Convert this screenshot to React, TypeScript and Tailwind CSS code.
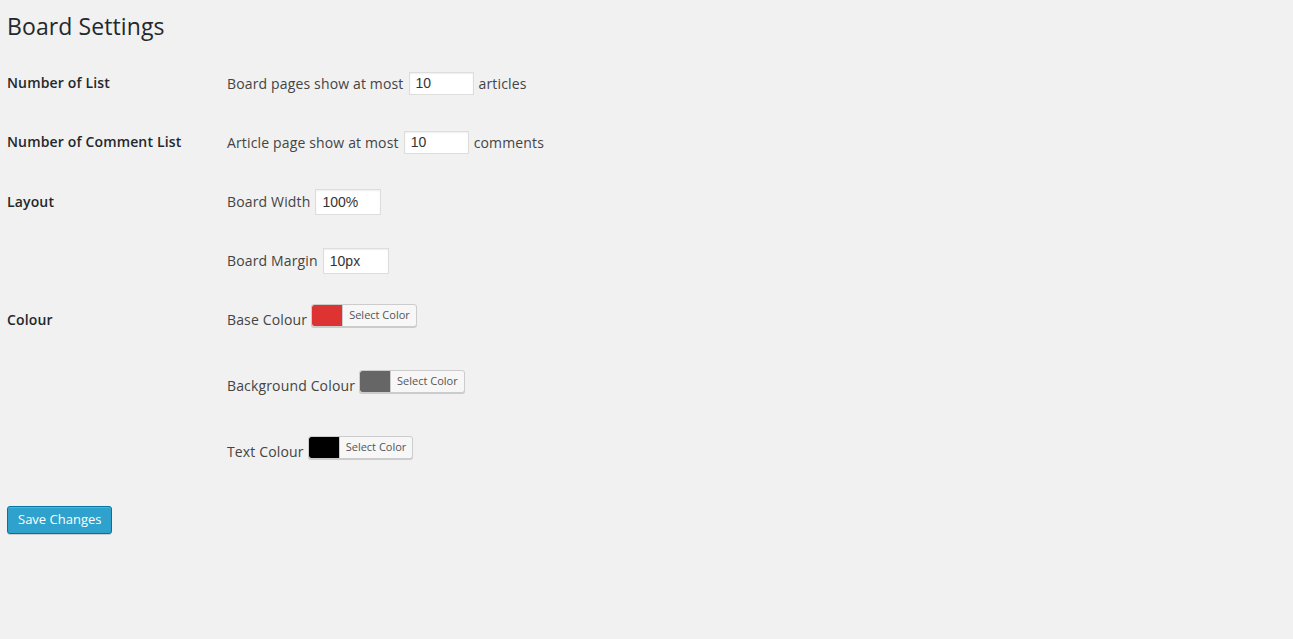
import React, { useState } from 'react';

const font = "font-['Open_Sans',_'Liberation_Sans',_sans-serif]";

const Label: React.FC<{ text?: string; shift?: boolean }> = ({ text, shift }) => (
    <div className={`w-[220px] shrink-0 text-[14px] leading-[20px] font-semibold tracking-[0.15px] text-[#23282d] ${shift ? 'mb-[-3px]' : ''}`}>
        {text}
    </div>
);

const NumberInput: React.FC<{ value: string; onChange: (v: string) => void }> = ({ value, onChange }) => (
    <input
        type="text"
        value={value}
        onChange={(e) => onChange(e.target.value)}
        className="mx-[5px] w-[65px] h-[23px] bg-white border border-[#ddd] px-[6px] text-[14px] tracking-normal text-[#333] font-['Liberation_Sans',_Arial,_sans-serif] shadow-[inset_0_1px_2px_rgba(0,0,0,0.07)] outline-none"
    />
);

const TextInput: React.FC<{ value: string; onChange: (v: string) => void }> = ({ value, onChange }) => (
    <input
        type="text"
        value={value}
        onChange={(e) => onChange(e.target.value)}
        className="ml-[5px] w-[66px] h-[26px] bg-white border border-[#ddd] px-[6px] text-[14px] tracking-normal text-[#333] font-['Liberation_Sans',_Arial,_sans-serif] shadow-[inset_0_1px_2px_rgba(0,0,0,0.07)] outline-none"
    />
);

const ColorButton: React.FC<{ swatch: string }> = ({ swatch }) => (
    <button className="ml-[4px] flex h-[23px] items-stretch rounded-[3px] border border-[#ccc] bg-[#f7f7f7] shadow-[0_1px_0_#ccc] overflow-hidden">
        <span className="w-[30px] rounded-l-[2px]" style={{ backgroundColor: swatch }} />
        <span className="flex items-center px-[6px] text-[11px] tracking-normal text-[#555] border-l border-[#ccc]">Select Color</span>
    </button>
);

const App: React.FC = () => {
    const [perPage, setPerPage] = useState('10');
    const [perComment, setPerComment] = useState('10');
    const [width, setWidth] = useState('100%');
    const [margin, setMargin] = useState('10px');

    const valueText = 'flex items-center text-[14px] tracking-[0.15px] text-[#444]';
    const colourText = 'mb-[-3px] text-[14px] leading-[20px] tracking-[0.15px] text-[#444]';

    return (
        <div className={`min-h-screen bg-[#f1f1f1] pl-[7px] ${font}`}>
            <div className="h-[54px] pt-[12px]">
                <h1 className="text-[23px] leading-[29px] font-normal tracking-[0.1px] text-[#23282d]">Board Settings</h1>
            </div>

            {/* number rows */}
            <div className="flex h-[59px] items-center pb-[1px]">
                <Label text="Number of List" />
                <div className={valueText}>
                    Board pages show at most
                    <NumberInput value={perPage} onChange={setPerPage} />
                    articles
                </div>
            </div>
            <div className="flex h-[59px] items-center pb-[1px]">
                <Label text="Number of Comment List" />
                <div className={valueText}>
                    Article page show at most
                    <NumberInput value={perComment} onChange={setPerComment} />
                    comments
                </div>
            </div>

            {/* layout */}
            <div className="flex h-[59px] items-center">
                <Label text="Layout" />
                <div className={valueText}>
                    Board Width
                    <TextInput value={width} onChange={setWidth} />
                </div>
            </div>
            <div className="flex h-[59px] items-center">
                <Label />
                <div className={valueText}>
                    Board Margin
                    <TextInput value={margin} onChange={setMargin} />
                </div>
            </div>

            {/* colours */}
            <div className="flex flex-col gap-[43px] pt-[14px]">
                <div className="flex items-end">
                    <Label text="Colour" shift />
                    <span className={colourText}>Base Colour</span>
                    <ColorButton swatch="#dd3333" />
                </div>
                <div className="flex items-end">
                    <Label />
                    <span className={colourText}>Background Colour</span>
                    <ColorButton swatch="#666666" />
                </div>
                <div className="flex items-end">
                    <Label />
                    <span className={colourText}>Text Colour</span>
                    <ColorButton swatch="#000000" />
                </div>
            </div>

            <div className="pt-[47px]">
                <button className="h-[28px] rounded-[3px] border border-[#0074a2] bg-[#2ea2cc] px-[10px] text-[13px] text-white shadow-[inset_0_1px_0_rgba(120,200,230,0.5),0_1px_0_rgba(0,0,0,0.15)]">
                    Save Changes
                </button>
            </div>
        </div>
    );
};

export default App;
